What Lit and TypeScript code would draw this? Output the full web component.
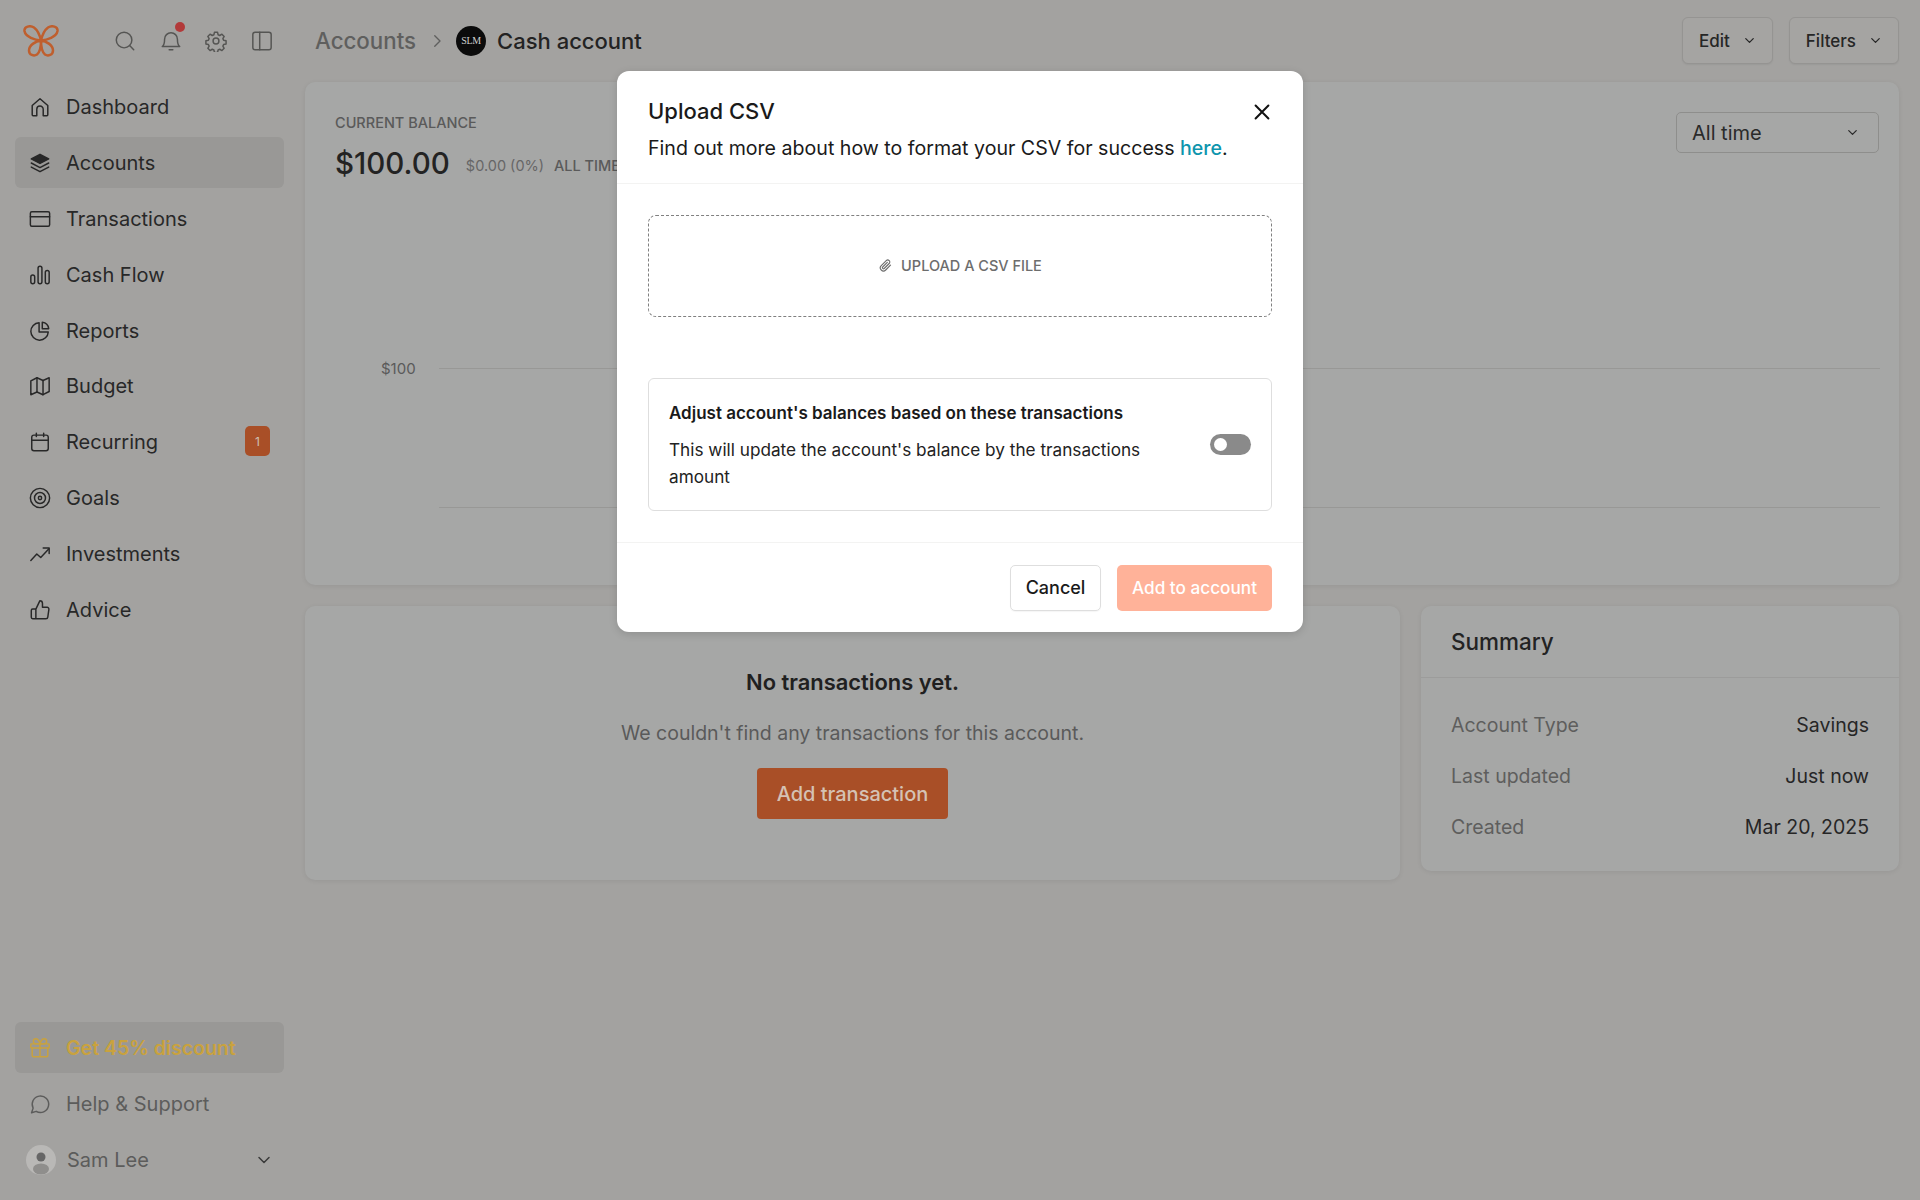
import { LitElement, html, css, svg } from "lit";
import { customElement } from "lit/decorators.js";

const P: Record<string, any> = {
  home: svg`<path d="M3.500 20.500V10.400L12 3l8.500 7.400v10.100a1 1 0 0 1-1 1h-4v-7a3.500 3.500 0 0 0-7 0v7h-4a1 1 0 0 1-1-1Z"/>`,
  layers: svg`<path d="M12 2.500 2.500 7.500l9.500 5 9.500-5-9.500-5Z" fill="currentColor"/><path d="m2.500 12 9.500 5 9.500-5"/><path d="m2.500 16.500 9.500 5 9.500-5"/>`,
  card: svg`<rect x="1.500" y="4" width="21" height="16" rx="1.600"/><path d="M1.500 9.500h21"/>`,
  bars: svg`<rect x="2" y="12" width="4.200" height="9.500" rx="2.100"/><rect x="9.900" y="2.500" width="4.200" height="19" rx="2.100"/><rect x="17.800" y="7" width="4.200" height="14.500" rx="2.100"/>`,
  pie: svg`<path d="M11 3a9.500 9.500 0 1 0 10 10H11V3Z"/><path d="M14.500 2.500a8 8 0 0 1 7 7h-7v-7Z"/>`,
  map: svg`<path d="M2 6.500 8.700 3l6.600 3L22 3v15l-6.700 3.500-6.600-3L2 21.500v-15Z"/><path d="M8.700 3v15.500M15.300 6v15.500"/>`,
  cal: svg`<rect x="3" y="4.500" width="18" height="17" rx="2.400"/><path d="M3 10h18M8 2.500v3.500M16 2.500v3.500"/>`,
  target: svg`<circle cx="12" cy="12" r="10.500"/><circle cx="12" cy="12" r="6"/><circle cx="12" cy="12" r="1.800"/>`,
  trend: svg`<path d="m2 19 6.500-7 4.300 3.800L21.500 6.500"/><path d="M15.500 5.500h6.500v6"/>`,
  thumb: svg`<path d="M7.500 11v10.500H4A1.500 1.500 0 0 1 2.500 20v-7.500A1.500 1.500 0 0 1 4 11h3.500Zm0 0 4.300-9c1.700 0 2.900 1.200 2.900 2.900V9h5a2 2 0 0 1 2 2.300l-1.200 8.400a2 2 0 0 1-2 1.800H7.500"/>`,
  gift: svg`<rect x="2" y="7.500" width="20" height="4.500" rx=".8"/><path d="M3.500 12v8.200a1.300 1.300 0 0 0 1.300 1.300h14.400a1.300 1.300 0 0 0 1.300-1.300V12M12 7.500v14M12 7.500S10.500 2 7.500 2a2.700 2.700 0 0 0 0 5.500H12Zm0 0S13.500 2 16.500 2a2.700 2.700 0 0 1 0 5.500H12Z"/>`,
  msg: svg`<path d="M2.800 21.500 4.500 16.500A9 9 0 1 1 7.800 20l-5 1.500Z"/>`,
  chev: svg`<path d="m6 9 6 6 6-6"/>`,
  chevR: svg`<path d="m9 5 7 7-7 7"/>`,
  search: svg`<circle cx="11" cy="11" r="8.500"/><path d="m21.500 21.500-4.500-4.500"/>`,
  bell: svg`<path d="M12 3a7 7 0 0 0-7 7c0 6-2.500 8-2.500 8h19S19 16 19 10a7 7 0 0 0-7-7Z"/><path d="M10 21.500h4"/>`,
  gear: svg`<circle cx="12" cy="12" r="3.200"/><path d="M10.300 2.500h3.400l.6 2.700 1.800.8 2.400-1.400 2.400 2.400-1.400 2.400.8 1.800 2.700.6v3.400l-2.700.6-.8 1.800 1.400 2.400-2.400 2.400-2.400-1.400-1.800.8-.6 2.700h-3.400l-.6-2.700-1.800-.8-2.400 1.400-2.400-2.400 1.400-2.400-.8-1.800-2.700-.6v-3.400l2.700-.6.8-1.800-1.400-2.400 2.400-2.400 2.400 1.400 1.800-.8.6-2.700Z"/>`,
  panel: svg`<rect x="2" y="2.500" width="20" height="19" rx="2.500"/><path d="M9.500 2.500v19"/>`,
  clip: svg`<path d="M20 11.500 12.300 19.200a5 5 0 0 1-7.100-7.100l8-8a3.300 3.300 0 0 1 4.700 4.700l-8 8a1.700 1.700 0 0 1-2.400-2.400l7.400-7.400"/>`,
  x: svg`<path d="m5 5 14 14M19 5 5 19"/>`,
};

const icon = (n: string, cls = "i") =>
  html`<svg class=${cls} viewBox="0 0 24 24" fill="none" stroke="currentColor" stroke-linecap="round" stroke-linejoin="round">${P[n]}</svg>`;

const NAV: [string, string][] = [
  ["home", "Dashboard"], ["layers", "Accounts"], ["card", "Transactions"], ["bars", "Cash Flow"], ["pie", "Reports"],
  ["map", "Budget"], ["cal", "Recurring"], ["target", "Goals"], ["trend", "Investments"], ["thumb", "Advice"],
];

@customElement("app-root")
export class AppRoot extends LitElement {
  static styles = css`
    :host { display: block; width: 1920px; height: 1200px; position: relative; overflow: hidden;
      background: #a3a2a0; color: #252525; font-family: Inter, "Liberation Sans", sans-serif; }
    * { box-sizing: border-box; }
    .page { display: grid; grid-template-columns: 305px 1fr; height: 1200px; }
    .side { display: flex; flex-direction: column; padding: 25px 21px 15.500px 15px; }
    .top { display: flex; align-items: center; height: 32px; padding-left: 8px; margin-bottom: 24px; }
    .logo { width: 36px; height: 32px; color: #bf5f2e; margin-right: 55px; flex: none; }
    .tools { display: flex; gap: 23.500px; color: #555553; position: relative; }
    .tools .i { width: 22px; height: 22px; stroke-width: 1.600; display: block; }
    .dot { position: absolute; left: 61px; top: -8px; width: 10px; height: 10px; border-radius: 50%; background: #b23a3a; }
    .nav { display: flex; flex-direction: column; gap: 5px; }
    .item { height: 50.900px; display: flex; align-items: center; gap: 15px; padding: 1px 14px 0 14px; border-radius: 6px; font-size: 20px; color: #282828; }
    .item .i { width: 22px; height: 22px; stroke-width: 1.600; flex: none; }
    .item.on, .item.promo { background: #999896; }
    .badge { margin-left: auto; width: 25px; height: 30px; border-radius: 5px; background: #a94f27; color: #cfc0b2; font-size: 12px; display: flex; align-items: center; justify-content: center; margin-top: -2px; }
    .foot { margin-top: auto; display: flex; flex-direction: column; gap: 5px; }
    .promo { color: #c9a23e; font-weight: 600; font-size: 19.500px; }
    .muted { color: #5c5c5b; }
    .user { padding: 1px 11px 0; gap: 11px; }
    .ava { width: 30px; height: 30px; border-radius: 50%; background: #b9b8b6; flex: none; overflow: hidden; }
    .ava svg { width: 30px; height: 30px; display: block; }
    .user .ch { margin-left: auto; width: 20px; height: 20px; stroke-width: 1.800; color: #3a3a3a; margin-right: -1px; }

    .main { padding: 17px 21px 0 0; display: flex; flex-direction: column; min-width: 0; }
    .bar { display: flex; align-items: center; height: 47px; margin-bottom: 18px; padding-left: 10px; }
    .crumb { font-size: 22.300px; font-weight: 500; color: #5f5f5e; }
    .sep { width: 18px; height: 18px; stroke-width: 1.800; color: #5f5f5e; margin: 0 10px 0 12px; }
    .bava { width: 30px; height: 30px; border-radius: 50%; background: #0b0b0b; color: #cfcfcf; font-size: 10px; display: flex; align-items: center; justify-content: center; margin-right: 11px; font-family: "Liberation Serif", serif; letter-spacing: -.3px; }
    .cur { font-size: 22px; font-weight: 500; color: #232323; }
    .btns { margin-left: auto; display: flex; gap: 16px; }
    .btn { height: 47px; border: 1px solid #959492; background: #a5a4a2; border-radius: 6px; display: flex; align-items: center; gap: 12px; padding: 0 15px 0 16px; font-size: 17px; font-weight: 500; color: #262626; box-shadow: 0 1px 2px rgba(0,0,0,.06); }
    .btn .i { width: 15px; height: 15px; stroke-width: 2; }

    .card { background: #a6a7a6; border-radius: 10px; box-shadow: 0 1px 5px rgba(0,0,0,.07); }
    .chart { height: 503px; padding: 30px 21px 0 30px; position: relative; margin-bottom: 21px; }
    .cl { font-size: 14.500px; font-weight: 500; color: #5a5a5a; line-height: 22px; }
    .bal { display: flex; align-items: center; margin-top: 11px; height: 36px; }
    .amt { font-size: 29.500px; font-weight: 500; color: #232323; line-height: 36px; }
    .delta { font-size: 14.500px; color: #666; margin-left: 16px; padding-top: 4px; }
    .all { font-size: 14.500px; font-weight: 500; color: #5a5a5a; margin-left: 10px; padding-top: 4px; }
    .sel { position: absolute; top: 30px; right: 20px; width: 203px; height: 41px; border: 1px solid #8e8e8c; border-radius: 5px; display: flex; align-items: center; justify-content: space-between; padding: 0 18px 0 15px; font-size: 20px; color: #2a2a2a; }
    .sel .i { width: 15px; height: 15px; stroke-width: 2; }
    .grid { margin-top: 177px; margin-left: 46px; display: flex; flex-direction: column; }
    .gl { display: flex; align-items: center; gap: 22px; height: 20px; font-size: 15px; color: #5a5a5a; }
    .gl span { width: 36px; }
    .gl i { flex: 1; height: 1px; background: #989896; margin-right: -2px; }
    .gl + .gl { margin-top: 119px; }

    .row { display: grid; grid-template-columns: 1095px 478px; gap: 21px; align-items: start; }
    .empty { height: 274px; display: flex; flex-direction: column; align-items: center; padding-top: 61px; }
    .empty h3 { margin: 0; font-size: 21.900px; font-weight: 600; line-height: 30px; color: #202020; }
    .empty p { margin: 22px 0 0; font-size: 19.500px; line-height: 28px; color: #5a5a5a; }
    .add { margin-top: 21px; width: 191px; height: 51px; border-radius: 4px; background: #a94f27; color: #d5c2b4; font-size: 20px; font-weight: 500; display: flex; align-items: center; justify-content: center; }
    .sum { height: 265px; }
    .sum h3 { margin: 0; height: 72px; padding: 0 30px; display: flex; align-items: center; font-size: 22.500px; font-weight: 500; color: #232323; border-bottom: 1px solid #9c9c9b; }
    .kv { padding: 21px 30px 0; display: flex; flex-direction: column; }
    .kv div { height: 51px; display: flex; justify-content: space-between; align-items: center; font-size: 19.500px; color: #262626; }
    .kv span:first-child { color: #5e5e5d; }

    .modal { position: absolute; left: 617px; top: 71px; width: 686px; height: 561px; background: #fff; border-radius: 12px; box-shadow: 0 2px 8px rgba(0,0,0,.14); display: flex; flex-direction: column; color: #1a1a1a; }
    .mh { height: 113px; padding: 24px 31px 0; border-bottom: 1px solid #f3f3f2; position: relative; }
    .mh h2 { margin: 0; font-size: 22px; font-weight: 500; line-height: 33px; }
    .mh p { margin: 4px 0 0; font-size: 19.600px; line-height: 32px; }
    .mh a { color: #0e95ad; font-weight: 500; }
    .close { position: absolute; right: 30px; top: 29.500px; width: 22px; height: 22px; stroke-width: 2.200; color: #111; }
    .mb { flex: 1; padding: 31px 31px 0; border-bottom: 1px solid #f3f3f2; display: flex; flex-direction: column; }
    .drop { height: 102px; border: 1.500px dashed #808080; border-radius: 8px; display: flex; align-items: center; justify-content: center; gap: 8px; font-size: 14.500px; font-weight: 500; color: #6d6d6d; padding-bottom: 2px; }
    .drop .i { width: 15px; height: 15px; stroke-width: 1.800; }
    .adj { margin-top: 61px; height: 133px; border: 1px solid #dedede; border-radius: 6px; padding: 22px 20px 0; display: flex; align-items: center; gap: 40px; }
    .adj > div:first-child { align-self: flex-start; flex: 1; }
    .adj b { display: block; font-size: 17px; font-weight: 600; line-height: 24px; color: #1a1a1a; }
    .adj p { margin: 11px 0 0; font-size: 17.200px; line-height: 27px; color: #222; }
    .tog { width: 41px; height: 21px; border-radius: 11px; background: #8a8a8a; padding: 4px; margin: -22px 0 0; flex: none; }
    .tog i { display: block; width: 13px; height: 13px; background: #fff; border-radius: 50%; }
    .mf { height: 89px; padding: 21.500px 31px 0; display: flex; justify-content: flex-end; gap: 16px; }
    .cancel, .go { height: 46px; border-radius: 5px; display: flex; align-items: center; justify-content: center; font-size: 18px; font-weight: 500; }
    .cancel { width: 91px; border: 1px solid #dedede; color: #1a1a1a; box-shadow: 0 1px 1px rgba(0,0,0,.04); }
    .go { width: 155px; background: #ffb299; color: #fff; font-size: 17.200px; }
  `;

  render() {
    return html`
      <div class="page">
        <aside class="side">
          <div class="top">
            <svg class="logo" viewBox="0 0 36 32" fill="none" stroke="currentColor" stroke-width="2.500" stroke-linecap="round">
              <path d="M18 15.500C12 15 2.500 12 1.500 6 1 1.500 7 0 11 2.500 15 5.500 17 11 18 15.500Zm0 0c6-.5 15.500-3.500 16.500-9.500C35 1.500 29 0 25 2.500 21 5.500 19 11 18 15.500Z"/>
              <path d="M18 15.500c-5 .5-12 4.500-12 10 0 4.500 5 6 8 4 3-2.500 4-9 4-14Zm0 0c5 .5 12 4.500 12 10 0 4.500-5 6-8 4-3-2.500-4-9-4-14Z"/>
            </svg>
            <div class="tools">
              ${icon("search")}${icon("bell")}${icon("gear")}${icon("panel")}
              <span class="dot"></span>
            </div>
          </div>
          <nav class="nav">
            ${NAV.map(([i, t]) => html`<div class="item ${t === "Accounts" ? "on" : ""}">${icon(i)}<span>${t}</span>${t === "Recurring" ? html`<span class="badge">1</span>` : ""}</div>`)}
          </nav>
          <div class="foot">
            <div class="item promo">${icon("gift")}<span>Get 45% discount</span></div>
            <div class="item muted">${icon("msg")}<span>Help &amp; Support</span></div>
            <div class="item muted user">
              <span class="ava"><svg viewBox="0 0 30 30"><circle cx="15" cy="12" r="4.500" fill="#666"/><ellipse cx="15" cy="24" rx="8" ry="5.500" fill="#8f8e8c"/></svg></span>
              <span>Sam Lee</span>${icon("chev", "ch")}
            </div>
          </div>
        </aside>
        <main class="main">
          <header class="bar">
            <span class="crumb">Accounts</span>${icon("chevR", "sep")}
            <span class="bava">SLM</span><span class="cur">Cash account</span>
            <div class="btns">
              <div class="btn">Edit ${icon("chev")}</div>
              <div class="btn">Filters ${icon("chev")}</div>
            </div>
          </header>
          <section class="card chart">
            <div class="cl">CURRENT BALANCE</div>
            <div class="bal"><span class="amt">$100.00</span><span class="delta">$0.00 (0%)</span><span class="all">ALL TIME</span></div>
            <div class="sel">All time ${icon("chev")}</div>
            <div class="grid">
              <div class="gl"><span>$100</span><i></i></div>
              <div class="gl"><span></span><i></i></div>
            </div>
          </section>
          <div class="row">
            <section class="card empty">
              <h3>No transactions yet.</h3>
              <p>We couldn't find any transactions for this account.</p>
              <div class="add">Add transaction</div>
            </section>
            <section class="card sum">
              <h3>Summary</h3>
              <div class="kv">
                <div><span>Account Type</span><span>Savings</span></div>
                <div><span>Last updated</span><span>Just now</span></div>
                <div><span>Created</span><span>Mar 20, 2025</span></div>
              </div>
            </section>
          </div>
        </main>
      </div>
      <div class="modal">
        <div class="mh">
          <h2>Upload CSV</h2>
          <p>Find out more about how to format your CSV for success <a>here</a>.</p>
          ${icon("x", "close")}
        </div>
        <div class="mb">
          <div class="drop">${icon("clip")}<span>UPLOAD A CSV FILE</span></div>
          <div class="adj">
            <div>
              <b>Adjust account's balances based on these transactions</b>
              <p>This will update the account's balance by the transactions amount</p>
            </div>
            <div class="tog"><i></i></div>
          </div>
        </div>
        <div class="mf">
          <div class="cancel">Cancel</div>
          <div class="go">Add to account</div>
        </div>
      </div>
    `;
  }
}
